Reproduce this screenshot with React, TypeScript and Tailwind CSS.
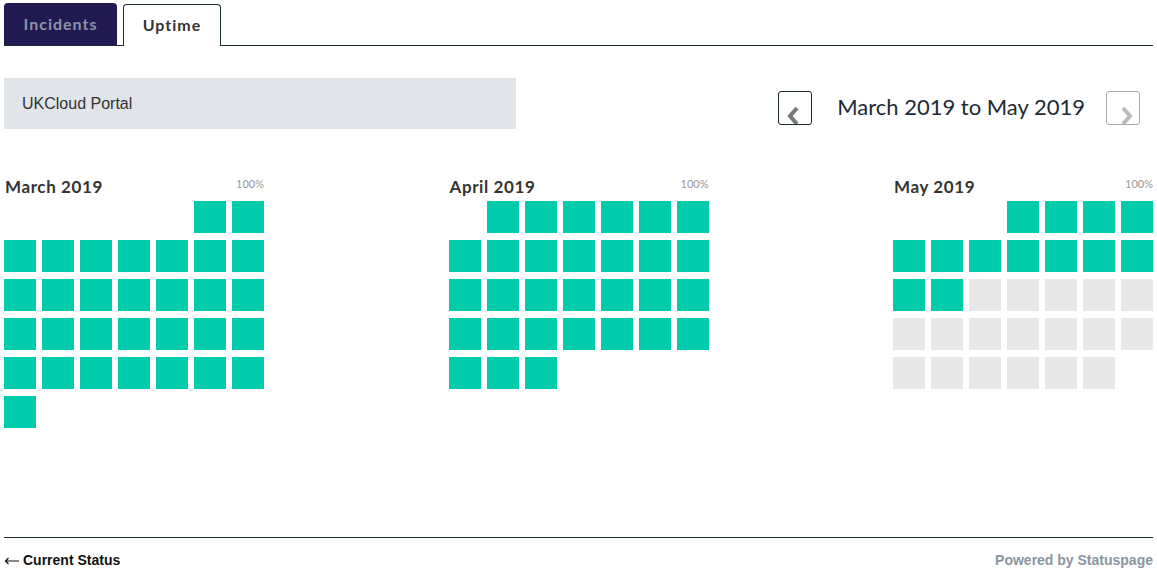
import React from "react";

const GREEN = "bg-[#00cbaa]";

type Month = { name: string; start: number; days: number; upTo: number };

const months: Month[] = [
  { name: "March 2019", start: 5, days: 31, upTo: 31 },
  { name: "April 2019", start: 1, days: 30, upTo: 30 },
  { name: "May 2019", start: 3, days: 31, upTo: 13 },
];

function MonthCal({ m }: { m: Month }) {
  const cells: React.ReactNode[] = [];
  for (let i = 0; i < m.start; i++) cells.push(<div key={"e" + i} className="w-[32px] h-[32px]" />);
  for (let d = 1; d <= m.days; d++) {
    cells.push(
      <div
        key={d}
        className={"w-[32px] h-[32px] " + (d <= m.upTo ? GREEN : "bg-[#e8e8e8]")}
      />
    );
  }
  return (
    <div className="w-[260px]">
      <div className="flex items-end justify-between h-[23px] mb-[6px]">
        <div className="text-[17px] font-bold text-[#333] leading-none pl-[1px] tracking-[0.6px]">{m.name}</div>
        <div className="text-[11px] text-[#999] leading-none pb-[6px]">100%</div>
      </div>
      <div className="grid grid-cols-[repeat(7,32px)] gap-x-[6px] gap-y-[7px]">{cells}</div>
    </div>
  );
}

export default function App() {
  return (
    <div className="w-[1157px] h-[572px] bg-white px-[4px] flex flex-col" style={{ fontFamily: "Lato, 'Noto Sans', sans-serif" }}>
      {/* Tabs */}
      <div className="flex items-end pt-[4px] border-b border-[#1b2a33] h-[46px]">
        <div className="w-[113px] h-[42px] bg-[#221b52] rounded-t-[4px] flex items-center justify-center text-[#8b93a6] text-[16px] font-bold pb-[1px] tracking-[1px]">
          Incidents
        </div>
        <div className="ml-[6px] w-[98px] h-[42px] bg-white border border-b-0 border-[#1b2a33] rounded-t-[4px] flex items-center justify-center text-[#333] text-[16px] font-bold mb-[-1px] pb-[1px] tracking-[1px]">
          Uptime
        </div>
      </div>

      {/* Controls */}
      <div className="flex items-center justify-between mt-[32px] h-[51px]">
        <div className="w-[512px] h-[51px] bg-[#e1e4e8] flex items-center pl-[18px] text-[16px] text-[#333]" style={{ fontFamily: "'Liberation Sans', Arial, sans-serif" }}>
          UKCloud Portal
        </div>
        <div className="flex items-center mr-[13px] mt-[8px]">
          <div className="relative w-[34px] h-[34px] border border-[#1b2a33] rounded-[3px] overflow-hidden">
            <svg width="16" height="22" viewBox="0 0 16 22" className="absolute left-[6px] top-[14px]">
              <path d="M12 2 L5 10 L12 18" stroke="#777" strokeWidth="4" fill="none" strokeLinejoin="miter" />
            </svg>
          </div>
          <div className="ml-[25px] mr-[21px] text-[22px] text-[#1b2a33] pb-[2px]">March 2019 to May 2019</div>
          <div className="relative w-[34px] h-[34px] border border-[#aaa] rounded-[3px] overflow-hidden">
            <svg width="16" height="22" viewBox="0 0 16 22" className="absolute left-[12px] top-[14px]">
              <path d="M4 2 L11 10 L4 18" stroke="#bbb" strokeWidth="4" fill="none" strokeLinejoin="miter" />
            </svg>
          </div>
        </div>
      </div>

      {/* Calendars */}
      <div className="flex justify-between mt-[43px]">
        {months.map((m) => (
          <MonthCal key={m.name} m={m} />
        ))}
      </div>

      <div className="flex-1" />

      {/* Footer */}
      <div className="border-t border-[#1b2a33] h-[35px] flex items-center justify-between pt-[11px] text-[14px] font-bold" style={{ fontFamily: "'Liberation Sans', Arial, sans-serif" }}>
        <div className="text-[#111] flex items-center">
          <svg width="16" height="8" viewBox="0 0 16 8" className="mr-[3px] mt-[1px]">
            <path d="M15 4 H1.5 M4.5 1 L1.5 4 L4.5 7" stroke="#111" strokeWidth="1.2" fill="none" />
          </svg>
          Current Status
        </div>
        <div className="text-[#8a959f]">Powered by Statuspage</div>
      </div>
    </div>
  );
}
